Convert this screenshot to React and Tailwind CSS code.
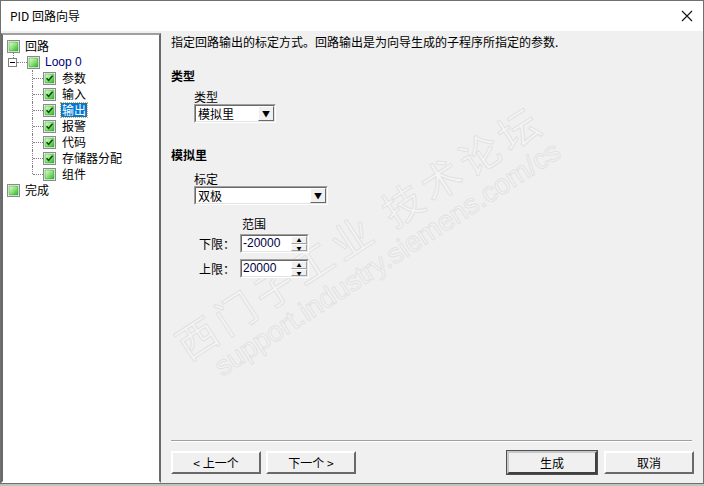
import React from 'react';

const FONT = { fontFamily: '"Noto Sans CJK SC", "Liberation Sans", sans-serif' };

function Box({ checked }) {
  return (
    <svg width="13" height="13" viewBox="0 0 13 13" className="shrink-0">
      <defs>
        <linearGradient id={checked ? 'gc' : 'gu'} x1="0" y1="0" x2="1" y2="1">
          <stop offset="0" stopColor="#e6ffd8" />
          <stop offset="0.5" stopColor="#8fe07a" />
          <stop offset="1" stopColor="#2fae2f" />
        </linearGradient>
      </defs>
      <rect x="0.5" y="0.5" width="12" height="12" fill="#fff" stroke="#8a8a8a" />
      <rect x="2" y="2" width="9" height="9" fill={`url(#${checked ? 'gc' : 'gu'})`} stroke="#3aa83a" strokeWidth="0.6" />
      {checked && <path d="M3.5 6.2 L5.6 8.4 L9.6 3.8" fill="none" stroke="#0b4f0b" strokeWidth="1.6" />}
    </svg>
  );
}

function Child({ label, checked, last, selected }) {
  return (
    <div className="flex h-[16px] items-center">
      <div className="relative h-full w-[40px] shrink-0">
        <span className={`absolute left-[29px] top-0 border-l border-dotted border-[#808080] ${last ? 'h-[8px]' : 'h-full'}`} />
        <span className="absolute left-[30px] top-[8px] w-[10px] border-t border-dotted border-[#808080]" />
      </div>
      <Box checked={checked} />
      <span
        className={`ml-[5px] px-[1px] text-[12px] leading-[14px] ${
          selected ? 'bg-[#0078d7] text-white outline outline-1 outline-dotted outline-[#f0a020]' : 'text-black'
        }`}
      >
        {label}
      </span>
    </div>
  );
}

function Select({ value, w }) {
  return (
    <div className={`flex h-[19px] ${w} border border-t-[#a0a0a0] border-l-[#a0a0a0] border-b-white border-r-white`}>
      <div className="flex flex-1 border border-t-[#696969] border-l-[#696969] border-b-[#e3e3e3] border-r-[#e3e3e3] bg-white">
        <span className="flex-1 pl-[2px] text-[12px] leading-[15px]">{value}</span>
        <span className="flex w-[16px] items-center justify-center border border-t-[#fff] border-l-[#fff] border-b-[#696969] border-r-[#696969] bg-[#f0f0f0] text-[8px] leading-none">
          ▼
        </span>
      </div>
    </div>
  );
}

function Spin({ value }) {
  return (
    <div className="flex h-[19px] w-[69px] border border-t-[#a0a0a0] border-l-[#a0a0a0] border-b-white border-r-white">
      <div className="flex flex-1 border border-t-[#696969] border-l-[#696969] border-b-[#e3e3e3] border-r-[#e3e3e3] bg-white">
        <span className="flex-1 pl-[1px] text-[12px] leading-[15px] text-[#000040]" style={{ fontFamily: '"Liberation Sans", sans-serif' }}>
          {value}
        </span>
        <div className="flex w-[16px] flex-col">
          <span className="flex h-1/2 items-center justify-center border border-t-white border-l-white border-b-[#a0a0a0] border-r-[#a0a0a0] bg-[#f0f0f0] text-[5px] leading-none">▲</span>
          <span className="flex h-1/2 items-center justify-center border border-t-white border-l-white border-b-[#a0a0a0] border-r-[#a0a0a0] bg-[#f0f0f0] text-[5px] leading-none">▼</span>
        </div>
      </div>
    </div>
  );
}

function Btn({ children, def }) {
  return (
    <button
      className={`flex h-[23px] w-[90px] items-center justify-center bg-[#f0f0f0] text-[12px] ${
        def ? 'border-2 border-t-[#c8c8c8] border-l-[#c8c8c8] border-b-[#404040] border-r-[#404040] outline outline-1 outline-[#505050]' : 'border-2 border-t-white border-l-white border-b-[#696969] border-r-[#696969]'
      }`}
    >
      {children}
    </button>
  );
}

export default function App() {
  return (
    <div className="relative flex h-[486px] w-[704px] flex-col overflow-hidden bg-[#f0f0f0] text-black" style={FONT}>
      {/* watermark, behind the dialog content */}
      <div className="pointer-events-none absolute left-[188px] top-[322px] z-0 origin-left -rotate-[33deg] select-none">
        <div
          className="whitespace-nowrap text-[40px] leading-[46px] tracking-[6px] text-[#f5f5f5] [-webkit-text-stroke:1px_#e2e2e2]"
          style={{ fontFamily: '"Noto Sans CJK SC", sans-serif' }}
        >
          西门子工业 技术论坛
        </div>
        <div
          className="ml-[20px] whitespace-nowrap text-[28px] leading-[32px] text-[#f5f5f5] [-webkit-text-stroke:1px_#e2e2e2]"
          style={{ fontFamily: '"Liberation Sans", sans-serif' }}
        >
          support.industry.siemens.com/cs
        </div>
      </div>

      {/* title bar */}
      <div className="relative z-10 flex h-[31px] shrink-0 items-center justify-between border-l border-r border-t border-[#707070] bg-white pl-[9px] pr-[10px]">
        <span className="text-[12px]">PID 回路向导</span>
        <svg width="12" height="12" viewBox="0 0 12 12">
          <path d="M1 1 L11 11 M11 1 L1 11" stroke="#111" strokeWidth="1.1" />
        </svg>
      </div>

      <div className="relative z-10 flex flex-1 border-l border-r border-[#707070]">
        {/* tree */}
        <div className="mt-[2px] flex w-[160px] shrink-0 border-2 border-t-[#a0a0a0] border-l-[#696969] border-b-white border-r-[#696969]">
          <div className="flex-1 bg-white pt-[3px] pl-[4px]">
            <div className="relative flex h-[16px] items-center">
              <Box />
              <span className="ml-[5px] text-[12px]">回路</span>
              <span className="absolute left-[6px] top-[14px] h-[6px] border-l border-dotted border-[#808080]" />
            </div>
            <div className="flex h-[16px] items-center">
              <span className="ml-[1px] flex h-[9px] w-[9px] items-center justify-center border border-[#808080] bg-white">
                <span className="w-[5px] border-t border-black" />
              </span>
              <span className="w-[10px] border-t border-dotted border-[#808080]" />
              <Box />
              <span className="ml-[5px] text-[12px] text-[#000080]" style={{ fontFamily: '"Liberation Sans", sans-serif' }}>Loop 0</span>
            </div>
            <div className="-ml-[4px]">
              <Child label="参数" checked />
              <Child label="输入" checked />
              <Child label="输出" checked selected />
              <Child label="报警" checked />
              <Child label="代码" checked />
              <Child label="存储器分配" checked />
              <Child label="组件" last />
            </div>
            <div className="flex h-[16px] items-center">
              <Box />
              <span className="ml-[5px] text-[12px]">完成</span>
            </div>
          </div>
        </div>

        {/* right pane */}
        <div className="flex flex-1 flex-col pl-[10px] pr-[9px]">
          <p className="mt-[3px] text-[12px] leading-[16px]">指定回路输出的标定方式。回路输出是为向导生成的子程序所指定的参数.</p>

          <p className="mt-[18px] text-[12px] font-bold leading-[16px]">类型</p>
          <div className="ml-[23px] mt-[6px] flex flex-col">
            <span className="text-[12px] leading-[14px]">类型</span>
            <Select value="模拟里" w="w-[82px]" />
          </div>

          <p className="mt-[24px] text-[12px] font-bold leading-[16px]">模拟里</p>
          <div className="ml-[23px] mt-[8px] flex flex-col">
            <span className="text-[12px] leading-[15px]">标定</span>
            <Select value="双极" w="w-[134px]" />
          </div>

          <div className="ml-[28px] mt-[11px] flex flex-col gap-[6px]">
            <span className="ml-[43px] -mb-[4px] text-[12px] leading-[16px]">范围</span>
            <div className="flex items-center">
              <span className="w-[41px] text-[12px]">下限：</span>
              <Spin value="-20000" />
            </div>
            <div className="flex items-center">
              <span className="w-[41px] text-[12px]">上限：</span>
              <Spin value="20000" />
            </div>
          </div>

          <div className="mr-[2px] mt-auto border-t border-b border-t-[#a0a0a0] border-b-white" />
          <div className="mb-[9px] mt-[9px] flex items-center">
            <Btn>&lt; 上一个</Btn>
            <span className="w-[5px]" />
            <Btn>下一个 &gt;</Btn>
            <span className="flex-1" />
            <Btn def>生成</Btn>
            <span className="w-[7px]" />
            <Btn>取消</Btn>
          </div>
        </div>
      </div>
      <div className="relative z-10 h-[3px] shrink-0 border-t border-[#707070] bg-[#b9c9b9]" />
    </div>
  );
}
